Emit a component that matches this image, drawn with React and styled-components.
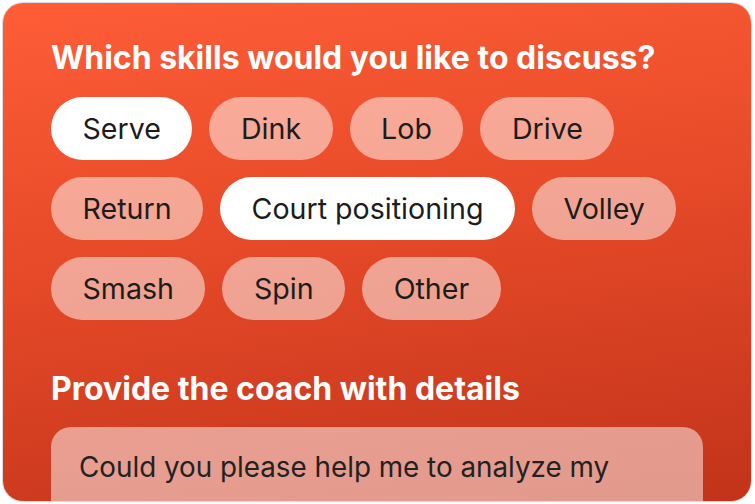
import React from "react";
import styled, { createGlobalStyle } from "styled-components";

const GlobalStyle = createGlobalStyle`
  html, body {
    margin: 0;
    padding: 0;
    background: #ffffff;
  }
  body {
    font-family: Inter, "Noto Sans", sans-serif;
  }
`;

const Page = styled.div`
  width: 755px;
  height: 504px;
  padding: 3px;
  box-sizing: border-box;
`;

const Card = styled.div`
  width: 748px;
  height: 498px;
  box-sizing: border-box;
  border-radius: 20px;
  overflow: hidden;
  background: linear-gradient(172deg, #fe5d37 0%, #e94c2a 40%, #c2331a 100%);
  box-shadow: 0 0 0 1px #dcdcdc;
  padding: 35px 48px 0 48px;
  display: flex;
  flex-direction: column;
`;

const Title = styled.h2`
  margin: 0;
  color: #ffffff;
  font-size: 32px;
  font-weight: 700;
  line-height: 40px;
`;

const Chips = styled.div`
  display: flex;
  flex-wrap: wrap;
  gap: 17px 17px;
  margin-top: 19px;
  width: 652px;
`;

const Chip = styled.button`
  height: 63px;
  padding: 0 31.5px;
  border: none;
  border-radius: 32px;
  font-family: Inter, "Noto Sans", sans-serif;
  font-size: 28.6px;
  font-weight: 400;
  color: #1c1c1c;
  background: ${p => (p.selected ? "#ffffff" : "rgba(255, 255, 255, 0.5)")};
  cursor: pointer;
`;

const Section = styled.div`
  margin-top: 49px;
  display: flex;
  flex-direction: column;
`;

const Details = styled.div`
  margin-top: 18px;
  width: 652px;
  height: 120px;
  box-sizing: border-box;
  border-radius: 20px;
  background: rgba(255, 255, 255, 0.5);
  padding: 23px 28px;
  font-size: 27.8px;
  line-height: 34px;
  color: #222222;
`;

const skills = [
  { label: "Serve", selected: true },
  { label: "Dink" },
  { label: "Lob" },
  { label: "Drive" },
  { label: "Return" },
  { label: "Court positioning", selected: true },
  { label: "Volley" },
  { label: "Smash" },
  { label: "Spin" },
  { label: "Other" },
];

export default function App() {
  return (
    <Page>
      <GlobalStyle />
      <Card>
        <Title>Which skills would you like to discuss?</Title>
        <Chips>
          {skills.map(s => (
            <Chip key={s.label} selected={s.selected}>
              {s.label}
            </Chip>
          ))}
        </Chips>
        <Section>
          <Title>Provide the coach with details</Title>
          <Details>Could you please help me to analyze my</Details>
        </Section>
      </Card>
    </Page>
  );
}
